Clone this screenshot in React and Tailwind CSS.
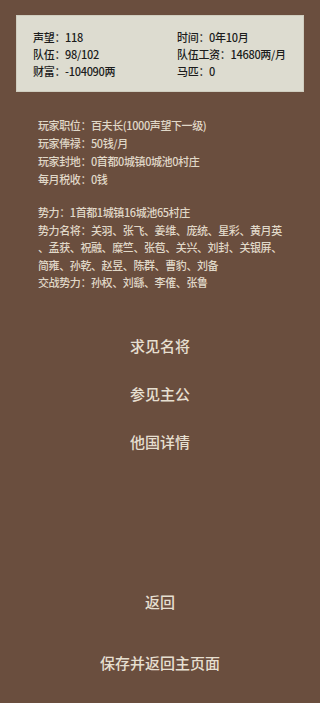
const stats = [
  ["声望：118", "时间：0年10月"],
  ["队伍：98/102", "队伍工资：14680两/月"],
  ["财富：-104090两", "马匹：0"],
];

const player = [
  "玩家职位：百夫长(1000声望下一级)",
  "玩家俸禄：50钱/月",
  "玩家封地：0首都0城镇0城池0村庄",
  "每月税收：0钱",
];

const faction = [
  "势力：1首都1城镇16城池65村庄",
  "势力名将：关羽、张飞、姜维、庞统、星彩、黄月英",
  "、孟获、祝融、糜竺、张苞、关兴、刘封、关银屏、",
  "简雍、孙乾、赵昱、陈群、曹豹、刘备",
  "交战势力：孙权、刘繇、李傕、张鲁",
];

const actions = ["求见名将", "参见主公", "他国详情"];

export default function App() {
  return (
    <div
      className="w-[320px] h-[703px] bg-[#6a4e3e] flex flex-col overflow-hidden"
      style={{ fontFamily: '"Noto Sans CJK SC", "Noto Sans", sans-serif' }}
    >
      {/* status panel */}
      <div className="mx-4 mt-[15px] h-[77px] bg-[#dddcd0] border border-[#cfcdbf] pl-4 pt-[13px]">
        {stats.map(([a, b]) => (
          <div key={a} className="grid grid-cols-[144px_1fr] text-[11px] font-medium tracking-[-0.3px] leading-[17px] text-[#1c1c1c]">
            <span>{a}</span>
            <span>{b}</span>
          </div>
        ))}
      </div>

      <div className="mt-6 pl-[38px] text-[11px] font-medium tracking-[-0.4px] leading-[18px] text-[#e0d8c8]">
        {player.map((t) => (
          <div key={t} className="whitespace-nowrap">{t}</div>
        ))}
      </div>

      <div className="mt-4 pl-[38px] text-[11px] font-medium tracking-[-0.4px] leading-[17.5px] text-[#e0d8c8]">
        {faction.map((t) => (
          <div key={t} className="whitespace-nowrap">{t}</div>
        ))}
      </div>

      <div className="mt-[31px] flex flex-col items-center text-[15px] font-medium text-[#e6dfd0]">
        {actions.map((t) => (
          <button key={t} className="h-12 w-full">{t}</button>
        ))}
      </div>

      <div className="mt-[112px] flex flex-col items-center gap-[13px] text-[15px] font-medium text-[#e6dfd0]">
        <button className="h-12 w-full">返回</button>
        <button className="h-12 w-full">保存并返回主页面</button>
      </div>
    </div>
  );
}
